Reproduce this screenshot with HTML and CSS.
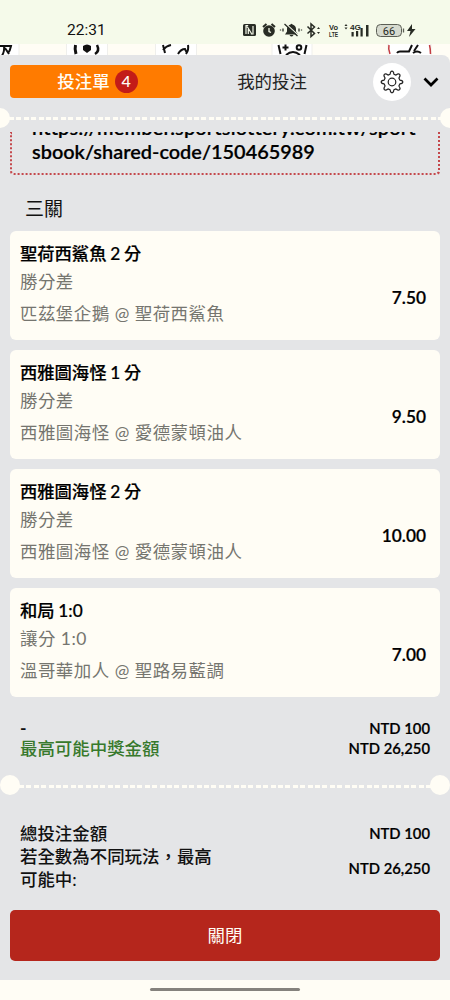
FILE: index.html
```html
<!DOCTYPE html>
<html lang="zh-Hant">
<head>
<meta charset="utf-8">
<meta name="viewport" content="width=device-width, initial-scale=1">
<title>投注單</title>
<link rel="stylesheet" href="styles.css">
</head>
<body>
<div class="phone">
  <header class="status">
    <span class="clock">22:31</span>
    <svg class="status-icons" viewBox="0 0 180 20" width="180" height="20">
      <g fill="#282c25">
        <rect x="3" y="4" width="13" height="12" rx="1.500"/>
        <path d="M8.200 5.500H6v8.500M6 7h1.500l4 6.500M10.800 14H13V6M8.300 9v5" fill="none" stroke="#f6faeb" stroke-width="1.200"/>
        <circle cx="29" cy="11" r="5.800"/>
        <path d="M23 7l3.500-3M35 7l-3.500-3" stroke="#282c25" stroke-width="2" fill="none"/>
        <path d="M29 8v3.500l2 1" stroke="#f6faeb" stroke-width="1.300" fill="none"/>
        <path d="M45 14.500l2-3V9q0-3.500 3.500-4.500 1-1.500 2 0 3.500 1 3.500 4.500v2.500l2 3zM49.500 15h4q-2 3-4 0z"/>
        <path d="M45.500 3.500l13 12" stroke="#f6faeb" stroke-width="1.200"/>
        <path d="M44.500 4l13 12M43 8.500v3M40.500 9.500v1M59 8.500v3M61.500 9.500v1" stroke="#282c25" stroke-width="1.300" fill="none"/>
        <path d="M67.500 6.500l7 7-3.500 3V4l3.500 3-7 6.500" fill="none" stroke="#282c25" stroke-width="1.500"/>
        <path d="M77 9l1.500-2 1.500 2zM77 12h3l-1.500 2z"/>
        <path d="M104.500 6l1.500-2 1.500 2zM104.500 7.500h3l-1.500 2z"/>
        <path d="M111.500 12h2.200v4.500h-2.200zM116 11h2.200v5.500H116zM120.500 8h2.200v8.500h-2.200zM126 5h2.500v11.500H126z"/>
      </g>
      <g class="tiny">
        <text x="89" y="9.500" textLength="9" lengthAdjust="spacingAndGlyphs">Vo</text>
        <text x="89" y="16.500" textLength="9" lengthAdjust="spacingAndGlyphs">LTE</text>
        <text x="110" y="9.500" textLength="11" lengthAdjust="spacingAndGlyphs">4G</text>
      </g>
      <rect x="136.500" y="4.500" width="25" height="12" rx="4" fill="#d6dacf" stroke="#5b5e55"/>
      <path d="M163.500 8.500v4" stroke="#5b5e55" stroke-width="1.300"/>
      <text class="battery" x="149" y="14.500" text-anchor="middle">66</text>
      <path d="M172 4l-5 7h3.500l-1.500 6 6.500-8h-3.500z" fill="#282c25"/>
    </svg>
  </header>

  <div class="peek">
    <svg viewBox="0 0 450 20" width="450" height="20">
      <g fill="#fff" stroke="#efefec" stroke-width="1">
        <path d="M-20-2h39v15h-39zM66.500-2h41v15h-41zM155.500-2h41v15h-41zM272-2h40v15h-40zM388-2h43v15h-43z"/>
      </g>
      <g fill="none" stroke="#111" stroke-width="2">
        <path d="M0 2h11q-1 5-3 7M4 2q1 8-5 13M5 4l4 6"/>
        <path d="M75.500 1q-1 4 .5 9" stroke-width="3"/>
        <path d="M97 1q3 6-2 9" stroke-width="2.500"/>
        <path d="M163 1l2 8M163 6q3-4 8-5M188 1q1 5-2 9M178 10q3-5 7-5l2 4"/>
        <path d="M278.500 1l2 9M306.500 1l-2 9M282.500 3.500h6M285.500 .5v6M286 11q7-6 14 0"/>
        <circle cx="299" cy="3.500" r="2.300"/>
        <path d="M397 9q1-1.500 3-1.500h9l3-6.500M418 1l-4 6M413 9q4-3 8 0"/>
        <path d="M389 1q-1 4 1 9M429.500 1q1 4 1 9" stroke="#c33d42" stroke-width="1.500"/>
      </g>
      <path d="M83 2q4-3 8 0v4l-4 3-4-3z" fill="#111"/>
    </svg>
  </div>

  <main class="sheet">
    <nav class="tabs">
      <div class="tab active">投注單<span class="count">4</span></div>
      <div class="tab">我的投注</div>
      <div class="gear">
        <svg viewBox="0 0 24 24" width="24" height="24" fill="none" stroke="#222" stroke-width="1.200" stroke-linejoin="round">
          <path d="M12 1.200Q13.600 1.200 13.900 4.200L16 5.100Q18.500 3.200 19.600 4.400T18.900 8L19.800 10.100Q22.800 10.400 22.800 12T19.800 13.900L18.900 16Q20.800 18.500 19.600 19.600T16 18.900L13.900 19.800Q13.600 22.800 12 22.800T10.100 19.800L8 18.900Q5.500 20.800 4.400 19.600T5.100 16L4.200 13.900Q1.200 13.600 1.200 12T4.200 10.100L5.100 8Q3.200 5.500 4.400 4.400T8 5.100L10.100 4.200Q10.400 1.200 12 1.200z"/>
          <circle cx="12" cy="12" r="3.800"/>
        </svg>
      </div>
      <svg class="chevron" viewBox="0 0 16 10" width="16" height="10"><path d="M1.500 1.500L8 8l6.500-6.500" fill="none" stroke="#000" stroke-width="2.700"/></svg>
    </nav>
    <div class="tear tear-top"></div>

    <div class="scroller">
      <div class="share">
        <p class="url"><span class="first">https://member.sportslottery.com.tw/sport</span><br>sbook/shared-code/150465989</p>
      </div>
      <h2>三關</h2>
      <section class="cards">
        <article class="card">
          <div><h3>聖荷西鯊魚 2 分</h3><p>勝分差</p><p class="match">匹茲堡企鵝 @ 聖荷西鯊魚</p></div>
          <span class="odds">7.50</span>
        </article>
        <article class="card">
          <div><h3>西雅圖海怪 1 分</h3><p>勝分差</p><p class="match">西雅圖海怪 @ 愛德蒙頓油人</p></div>
          <span class="odds">9.50</span>
        </article>
        <article class="card">
          <div><h3>西雅圖海怪 2 分</h3><p>勝分差</p><p class="match">西雅圖海怪 @ 愛德蒙頓油人</p></div>
          <span class="odds">10.00</span>
        </article>
        <article class="card">
          <div><h3>和局 1:0</h3><p>讓分 1:0</p><p class="match">溫哥華加人 @ 聖路易藍調</p></div>
          <span class="odds">7.00</span>
        </article>
      </section>
      <section class="sums">
        <div class="row"><span>-</span><span class="money">NTD 100</span></div>
        <div class="row"><span class="green">最高可能中獎金額</span><span class="money">NTD 26,250</span></div>
      </section>
    </div>

    <div class="tear"></div>
    <section class="totals">
      <div class="row"><span>總投注金額</span><span class="money">NTD 100</span></div>
      <div class="row"><span>若全數為不同玩法，最高<br>可能中:</span><span class="money">NTD 26,250</span></div>
    </section>
    <button class="close">關閉</button>
  </main>
  <footer class="homebar"><span></span></footer>
</div>
</body>
</html>
```

FILE: styles.css
```css
* { box-sizing: border-box; }
body, p, h2, h3 { margin: 0; }
body {
  width: 450px;
  height: 1000px;
  overflow: hidden;
  font-family: Lato, "Noto Sans CJK TC", sans-serif;
  font-size: 17.45px;
  color: #111;
}
.phone {
  display: flex;
  flex-direction: column;
  height: 1000px;
  background: #fffdf5;
}
.status {
  display: flex;
  justify-content: space-between;
  height: 44px;
  padding: 20px 30px 0 67px;
  background: #f5faea;
}
.clock {
  font: 400 15.5px/21px Roboto, sans-serif;
  color: #111;
}
.tiny { font: bold 8px "Liberation Sans", sans-serif; fill: #282c25; }
.battery { font: 11px Roboto, sans-serif; fill: #282c25; }
.peek { height: 11px; }
.peek svg { display: block; }
.sheet {
  display: flex;
  flex-direction: column;
  height: 925px;
  background: #e4e5e7;
  border-radius: 0 8px 0 0;
  position: relative;
}
.tabs {
  display: flex;
  align-items: center;
  height: 53px;
  padding: 0 11px 0 10px;
}
.tab {
  display: flex;
  align-items: center;
  justify-content: center;
  width: 180px;
  height: 33px;
  line-height: 33px;
  color: #222;
}
.tab.active {
  width: 172px;
  padding-left: 3px;
  gap: 5px;
  border-radius: 4px;
  background: #ff7b00;
  color: #fffdf5;
  font-weight: 500;
}
.count {
  width: 23px;
  height: 23px;
  border-radius: 50%;
  background: #c31c18;
  font-size: 16px;
  line-height: 22px;
  text-align: center;
}
.gear {
  display: flex;
  align-items: center;
  justify-content: center;
  width: 38px;
  height: 38px;
  margin-left: 11px;
  border-radius: 50%;
  background: #fff;
}
.chevron { margin-left: 12px; }
.tear {
  display: flex;
  align-items: center;
  justify-content: space-between;
  height: 20px;
  flex: none;
  background: repeating-linear-gradient(90deg, #fffdf5 0 5px, transparent 5px 7.4px) 19px 10px / 412px 3px no-repeat;
}
.tear::before, .tear::after {
  content: "";
  width: 20px;
  height: 20px;
  border-radius: 50%;
  background: #fffdf5;
}
.tear-top {
  margin: 0 -10px;
  width: 470px;
  background-position: 19px 9px;
  background-size: 432px 3px;
  clip-path: inset(0 10px);
}
.scroller {
  height: 643px;
  margin-top: 4px;
  padding: 0 10px;
  overflow: hidden;
  flex: none;
}
.share {
  height: 43px;
  padding: 0 20px 0 21px;
  border: 2px dotted #c4484c;
  border-top: 0;
  border-radius: 0 0 4px 4px;
  overflow: hidden;
}
.url {
  margin: -17px -10px 0 -1px;
  font-size: 19.9px;
  font-weight: 600;
  line-height: 24px;
  white-space: nowrap;
  color: #000;
  -webkit-text-stroke: 0.2px #000;
}
.url .first { letter-spacing: 0.18px; }
h2 {
  height: 56px;
  padding: 0 15px;
  font-size: 19px;
  font-weight: 400;
  line-height: 67px;
}
.cards { display: grid; gap: 10px; }
.card {
  display: flex;
  justify-content: space-between;
  height: 109px;
  padding: 9px 14px 0 10px;
  border-radius: 6px;
  background: #fffdf5;
}
h3 {
  height: 28px;
  font-size: 17.3px;
  font-weight: 500;
  line-height: 28px;
  color: #000;
  word-spacing: -0.6px;
  -webkit-text-stroke: 0.2px #000;
}
.card p { height: 28px; line-height: 28px; color: #75756f; letter-spacing: 0.5px; }
.card .match { height: 35px; line-height: 35px; }
.odds {
  margin-top: 44px;
  font-size: 17.3px;
  font-weight: 600;
  line-height: 28px;
  color: #000;
  -webkit-text-stroke: 0.2px #000;
}
.sums { padding: 21px 10px 0; }
.row { display: flex; justify-content: space-between; align-items: center; }
.row > span:first-child { font-weight: 500; }
.sums .row { height: 20px; line-height: 20px; }
.sums .green { padding-top: 1px; color: #37792c; }
.row .money { font-size: 14.8px; font-weight: 600; color: #000; -webkit-text-stroke: 0.2px #000; }
.sums > .row:first-child > span:first-child { font-weight: 700; }
.totals { padding: 27px 20px 0; }
.totals .row { line-height: 23px; }
.close {
  flex: none;
  height: 51px;
  margin: 19px 10px 0;
  padding: 0;
  border: 0;
  border-radius: 5px;
  background: #b5261c;
  color: #fffdf5;
  font: 400 17.4px/51px Lato, "Noto Sans CJK TC", sans-serif;
}
.homebar { height: 20px; padding-top: 8px; }
.homebar span { display: block; width: 150px; height: 3px; margin: 0 auto; border-radius: 2px; background: #85827d; }
```
